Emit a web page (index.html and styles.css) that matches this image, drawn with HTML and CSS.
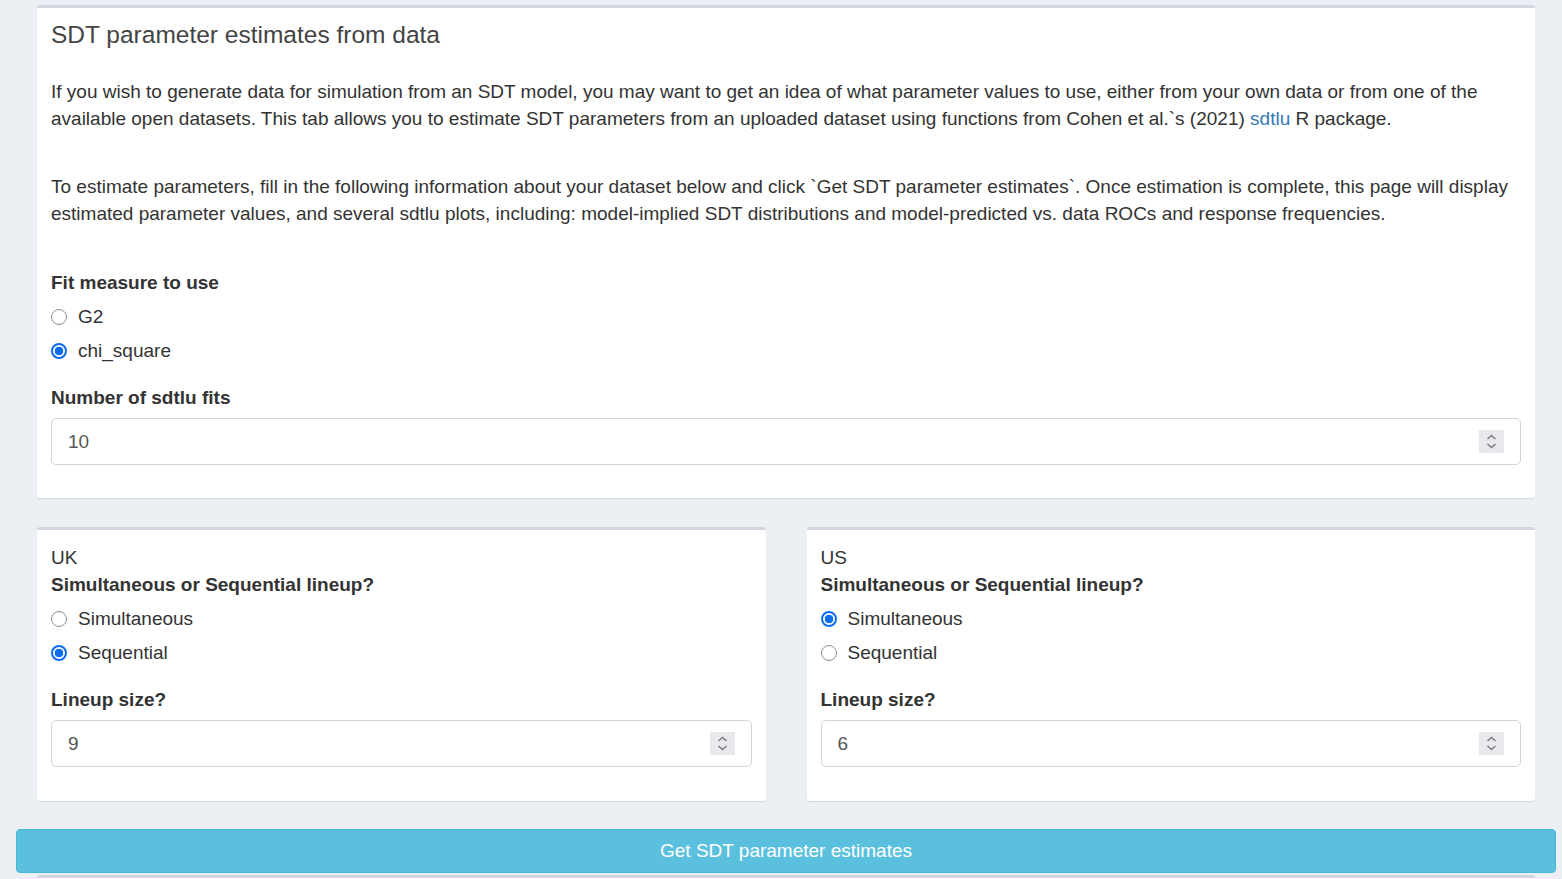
FILE: index.html
```html
<!DOCTYPE html>
<html lang="en">
<head>
<meta charset="utf-8">
<title>SDT parameter estimates from data</title>
<link rel="stylesheet" href="styles.css">
</head>
<body>
<div class="page">
  <div class="row">
    <section class="box box-full">
      <h3 class="box-title">SDT parameter estimates from data</h3>
      <p class="intro">If you wish to generate data for simulation from an SDT model, you may want to get an idea of what parameter values to use, either from your own data or from one of the available open datasets. This tab allows you to estimate SDT parameters from an uploaded dataset using functions from Cohen et al.`s (2021) <a href="#" class="link">sdtlu</a> R package.</p>
      <p class="intro2">To estimate parameters, fill in the following information about your dataset below and click `Get SDT parameter estimates`. Once estimation is complete, this page will display estimated parameter values, and several sdtlu plots, including: model-implied SDT distributions and model-predicted vs. data ROCs and response frequencies.</p>

      <div class="group group-first">
        <div class="label">Fit measure to use</div>
        <div class="radios">
          <label class="radio"><span class="dot"></span><span>G2</span></label>
          <label class="radio"><span class="dot on"></span><span>chi_square</span></label>
        </div>
      </div>

      <div class="group group-num">
        <div class="label">Number of sdtlu fits</div>
        <div class="numinput">
          <span class="val">10</span>
          <span class="spin"><svg width="25" height="23" viewBox="0 0 25 23"><path d="M8.5 9 L12.5 5.5 L16.5 9" fill="none" stroke="#7d7d85" stroke-width="1.6"/><path d="M8.5 14 L12.5 17.5 L16.5 14" fill="none" stroke="#7d7d85" stroke-width="1.6"/></svg></span>
        </div>
      </div>
    </section>
  </div>

  <div class="row row-two">
    <section class="box box-half">
      <div class="plain">UK</div>
      <div class="label">Simultaneous or Sequential lineup?</div>
      <div class="radios">
        <label class="radio"><span class="dot"></span><span>Simultaneous</span></label>
        <label class="radio"><span class="dot on"></span><span>Sequential</span></label>
      </div>
      <div class="group group-num">
        <div class="label">Lineup size?</div>
        <div class="numinput">
          <span class="val">9</span>
          <span class="spin"><svg width="25" height="23" viewBox="0 0 25 23"><path d="M8.5 9 L12.5 5.5 L16.5 9" fill="none" stroke="#7d7d85" stroke-width="1.6"/><path d="M8.5 14 L12.5 17.5 L16.5 14" fill="none" stroke="#7d7d85" stroke-width="1.6"/></svg></span>
        </div>
      </div>
    </section>
    <section class="box box-half">
      <div class="plain">US</div>
      <div class="label">Simultaneous or Sequential lineup?</div>
      <div class="radios">
        <label class="radio"><span class="dot on"></span><span>Simultaneous</span></label>
        <label class="radio"><span class="dot"></span><span>Sequential</span></label>
      </div>
      <div class="group group-num">
        <div class="label">Lineup size?</div>
        <div class="numinput">
          <span class="val">6</span>
          <span class="spin"><svg width="25" height="23" viewBox="0 0 25 23"><path d="M8.5 9 L12.5 5.5 L16.5 9" fill="none" stroke="#7d7d85" stroke-width="1.6"/><path d="M8.5 14 L12.5 17.5 L16.5 14" fill="none" stroke="#7d7d85" stroke-width="1.6"/></svg></span>
        </div>
      </div>
    </section>
  </div>

  <button class="btn-info" type="button">Get SDT parameter estimates</button>

  <div class="row">
    <section class="box box-full box-next"></section>
  </div>
</div>
</body>
</html>
```

FILE: styles.css
```css
* { box-sizing: border-box; }

html, body {
  margin: 0;
  padding: 0;
  background: #ecf0f5;
  height: 879px;
  overflow: hidden;
}

body {
  font-family: "Liberation Sans", Arial, sans-serif;
  font-size: 19px;
  line-height: 27px;
  color: #333;
}

.page {
  padding: 5px 6px 0 16px;
}

.row {
  padding: 0 21px;
}

.row-two {
  display: grid;
  grid-template-columns: 1fr 1fr;
  column-gap: 41px;
  margin-top: 29px;
}

.box {
  background: #fff;
  border-top: 3px solid #d2d6de;
  border-radius: 3px;
  box-shadow: 0 1px 1px rgba(0, 0, 0, 0.1);
  padding: 14px 14px 33px 14px;
}

.box-half {
  padding-top: 14px;
  padding-bottom: 34px;
}

.box-title {
  margin: 0;
  font-size: 24.5px;
  line-height: 26px;
  font-weight: 400;
  color: #444;
}

.intro {
  margin: 30px 0 0 0;
}

.intro2 {
  margin: 41px 0 0 0;
}

.link {
  color: #337ab7;
  text-decoration: none;
}

.group-first {
  margin-top: 42px;
}

.label {
  font-weight: 700;
}

.plain {
  font-weight: 400;
}

.radios {
  display: flex;
  flex-direction: column;
  gap: 7px;
  margin-top: 7px;
}

.radio {
  display: flex;
  align-items: center;
  gap: 11px;
  height: 27px;
}

.dot {
  width: 16px;
  height: 16px;
  border-radius: 50%;
  border: 1.5px solid #8f8f9d;
  background: #fff;
  flex: none;
}

.dot.on {
  border: 2px solid #0b6cf0;
  background: radial-gradient(circle, #0b6cf0 0 4px, #fff 4.6px);
}

.group-num {
  margin-top: 20px;
}

.numinput {
  margin-top: 7px;
  height: 47px;
  border: 1px solid #d4d4d4;
  border-radius: 5px;
  display: flex;
  align-items: center;
  justify-content: space-between;
  padding: 0 16px 0 16px;
  color: #555;
}

.spin {
  display: flex;
  width: 25px;
  height: 23px;
  background: #e9e9ed;
}

.btn-info {
  display: block;
  width: 100%;
  margin-top: 28px;
  height: 44px;
  background: #5bc0de;
  border: 1px solid #46b8da;
  border-radius: 4px;
  color: #fff;
  font-family: "Liberation Sans", Arial, sans-serif;
  font-size: 19px;
  padding: 0;
}

.box-next {
  margin-top: 2px;
  height: 40px;
  padding: 0;
}
```
